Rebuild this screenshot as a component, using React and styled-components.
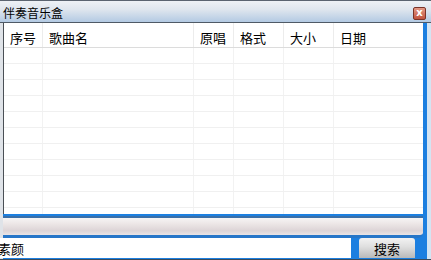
import React from "react";
import styled, { createGlobalStyle } from "styled-components";

const Global = createGlobalStyle`
  html, body { margin: 0; padding: 0; background: #fff; }
  body { font-family: "Noto Sans CJK SC", "Noto Sans", sans-serif; }
`;

const Window = styled.div`
  width: 431px;
  height: 260px;
  box-sizing: border-box;
  display: flex;
  flex-direction: column;
  background: #1c7fe0;
  border-bottom: 1px solid #3a4a5a;
  overflow: hidden;
`;

const TitleBar = styled.div`
  height: 21px;
  flex: none;
  display: flex;
  align-items: center;
  justify-content: space-between;
  padding: 0 5px 0 3px;
  background: linear-gradient(#eef1f5 0%, #dfe6ee 40%, #b3cae3 100%);
  border-top: 1px solid #5b6470;
  border-bottom: 1px solid #4f5a66;
`;

const Title = styled.span`
  font-size: 12px;
  color: #000;
  line-height: 1;
  padding-top: 2px;
`;

const CloseBtn = styled.div`
  width: 13px;
  height: 13px;
  box-sizing: border-box;
  border: 1px solid #7a3328;
  border-radius: 2px;
  background: linear-gradient(#e49a86, #c2533e);
  color: #fff;
  font-size: 10px;
  font-weight: bold;
  font-family: "DejaVu Sans", sans-serif;
  display: flex;
  align-items: center;
  justify-content: center;
  line-height: 1;
  margin-top: 3px;
`;

const Body = styled.div`
  flex: 1;
  display: flex;
  flex-direction: column;
  padding: 0 4px 0 0;
  background: linear-gradient(to right, #dfe3e8 0, #dfe3e8 3px, #1c7fe0 3px);
  border-right: 4px solid #d4e4f2;
`;

const List = styled.div`
  height: 191px;
  flex: none;
  margin-left: 3px;
  background: #fff;
  border-left: 1px solid #4a4f55;
  display: flex;
  flex-direction: column;
  overflow: hidden;
`;

const cols = "39px 151px 40px 50px 50px 1fr";

const HeaderRow = styled.div`
  display: grid;
  grid-template-columns: ${cols};
  height: 24px;
  flex: none;
  border-bottom: 1px solid #dcdcdc;
  background: #fff;
`;

const HeadCell = styled.div`
  font-size: 13px;
  color: #000;
  padding: 5px 0 0 6px;
  line-height: 1;
  border-right: ${(p) => (p.$last ? "none" : "1px solid #ececec")};
  display: flex;
  align-items: center;
`;

const Row = styled.div`
  display: grid;
  grid-template-columns: ${cols};
  height: 15px;
  flex: none;
  border-bottom: 1px solid #f0f0f0;
`;

const Cell = styled.div`
  border-right: ${(p) => (p.$last ? "none" : "1px solid #f2f2f2")};
`;

const ProgressWrap = styled.div`
  margin: 2px 0 0 3px;
  height: 22px;
  flex: none;
  box-sizing: border-box;
  border-top: 2px solid #3a6fa8;
  border-bottom: 3px solid #2676c8;
  background: linear-gradient(#f6f4f4 0%, #ece6e6 35%, #dcd4d6 75%, #e8e4e6 100%);
  border-radius: 0 0 5px 0;
`;

const SearchRow = styled.div`
  flex: 1;
  display: flex;
  align-items: stretch;
  margin-left: -3px;
  padding: 0 0 1px 0;
`;

const Input = styled.div`
  width: 353px;
  flex: none;
  background: #fff;
  font-size: 13px;
  color: #000;
  display: flex;
  align-items: center;
  padding-left: 1px;
  line-height: 1;
`;

const SearchBtn = styled.div`
  width: 56px;
  margin-left: 8px;
  border-radius: 3px 3px 0 0;
  background: linear-gradient(#f2f2f2 0%, #dedede 45%, #b9b9b9 100%);
  font-size: 13px;
  color: #000;
  display: flex;
  align-items: center;
  justify-content: center;
  line-height: 1;
`;

const headers = ["序号", "歌曲名", "原唱", "格式", "大小", "日期"];

export default function App() {
  return (
    <>
      <Global />
      <Window>
        <TitleBar>
          <Title>伴奏音乐盒</Title>
          <CloseBtn>x</CloseBtn>
        </TitleBar>
        <Body>
          <List>
            <HeaderRow>
              {headers.map((h, i) => (
                <HeadCell key={h} $last={i === headers.length - 1}>
                  {h}
                </HeadCell>
              ))}
            </HeaderRow>
            {Array.from({ length: 11 }).map((_, r) => (
              <Row key={r}>
                {headers.map((h, i) => (
                  <Cell key={h} $last={i === headers.length - 1} />
                ))}
              </Row>
            ))}
          </List>
          <ProgressWrap />
          <SearchRow>
            <Input>素颜</Input>
            <SearchBtn>搜索</SearchBtn>
          </SearchRow>
        </Body>
      </Window>
    </>
  );
}
